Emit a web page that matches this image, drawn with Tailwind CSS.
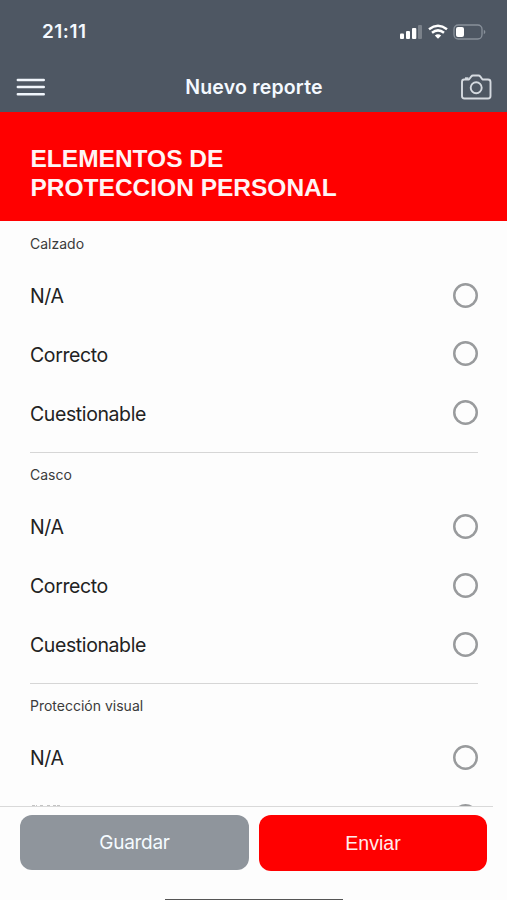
<!DOCTYPE html>
<html lang="es">
<head>
<meta charset="utf-8">
<title>Nuevo reporte</title>
<script src="https://cdn.jsdelivr.net/npm/@tailwindcss/browser@4"></script>
</head>
<body class="w-[507px] h-[900px] overflow-hidden bg-[#fdfdfd] font-['Inter','Liberation_Sans',sans-serif] text-[#222]">
<div class="flex h-[900px] flex-col overflow-hidden">
  <header class="h-[112px] shrink-0 bg-[#4e5763] text-[#f4f9ff]">
    <div class="flex h-[62px] items-center justify-between pl-[42px] pr-[20px]">
      <span class="pt-[2px] text-[19px] font-semibold tracking-[0.5px]">21:11</span>
      <svg width="88" height="20" viewBox="0 0 88 20" fill="none">
        <g fill="#fff"><rect x="1" y="12.5" width="4" height="5.500" rx="1"/><rect x="7" y="10" width="4" height="8" rx="1"/><rect x="13" y="7" width="4.300" height="11" rx="1"/><rect x="19" y="4" width="4" height="14" rx="1" opacity=".25"/></g>
        <g stroke="#fff" stroke-width="2.500"><path d="M30 8.200Q39 1.400 48 8.200"/><path d="M33 11.800Q39 7 45 11.800"/></g>
        <path d="M35.800 14.400Q39 12 42.200 14.400L39 17.800Z" fill="#fff"/>
        <rect x="55" y="4" width="28" height="14" rx="4.200" stroke="#89919b" stroke-width="1.300"/>
        <rect x="57" y="6" width="8" height="10" rx="2" fill="#fff"/>
        <path d="M84.800 8.800v4.400q1.600-.7 1.600-2.200t-1.600-2.200Z" fill="#89919b"/>
      </svg>
    </div>
    <div class="grid h-[50px] grid-cols-[1fr_auto_1fr] items-center pl-[16px] pr-[15px]">
      <svg width="30" height="20" viewBox="0 0 30 20" stroke="#f1f6fc" stroke-width="2.400" stroke-linecap="round"><path d="M1.800 3h26M1.800 10h26M1.800 17.200h26"/></svg>
      <h1 class="pt-[2px] text-[19.5px] font-semibold leading-none tracking-[0.2px]">Nuevo reporte</h1>
      <svg class="justify-self-end" width="32" height="26" viewBox="0 0 32 26" fill="none" stroke="#d5dae0" stroke-width="1.900" stroke-linejoin="round">
        <path d="M4 5.500H9L11.300 2.400Q11.900 1.500 13 1.500h5.500q1.100 0 1.700.9L22.500 5.500H28q2.500 0 2.500 2.500v14q0 2.500-2.500 2.500H4.500Q2 24.500 2 22V8q0-2.500 2-2.500Z"/>
        <circle cx="16.200" cy="13.800" r="5.500"/><path d="M5 4.300h3.500" stroke-width="2"/>
      </svg>
    </div>
  </header>

  <div class="flex h-[109px] shrink-0 items-center bg-[#ff0000] pl-[30.500px] pt-[12px] pb-0 font-['Liberation_Sans',sans-serif]">
    <h2 class="text-[24.5px] font-bold leading-[29px] text-[#fff4f4]">ELEMENTOS DE<br>PROTECCION PERSONAL</h2>
  </div>

  <main class="h-[585px] shrink-0 overflow-hidden px-[30px]">
    <section class="h-[231.500px] border-b border-[#d6d6d6] w-[448px]">
      <h3 class="flex h-[45px] items-center text-[14px] leading-none text-[#3b3b3b]">Calzado</h3>
      <label class="flex h-[58.670px] items-center justify-between text-[19.5px] tracking-[-0.4px]"><span class="pt-[3px]">N/A</span><i class="size-[25px] rounded-full shadow-[inset_0_0_0_2.5px_#999b9d]"></i></label>
      <label class="flex h-[58.670px] items-center justify-between text-[19.5px] tracking-[-0.4px]"><span class="pt-[3px]">Correcto</span><i class="size-[25px] rounded-full shadow-[inset_0_0_0_2.5px_#999b9d]"></i></label>
      <label class="flex h-[58.670px] items-center justify-between text-[19.5px] tracking-[-0.4px]"><span class="pt-[3px]">Cuestionable</span><i class="size-[25px] rounded-full shadow-[inset_0_0_0_2.5px_#999b9d]"></i></label>
    </section>
    <section class="h-[231px] border-b border-[#d6d6d6] w-[448px]">
      <h3 class="flex h-[45px] items-center text-[14px] leading-none text-[#3b3b3b]">Casco</h3>
      <label class="flex h-[58.670px] items-center justify-between text-[19.5px] tracking-[-0.4px]"><span class="pt-[2px]">N/A</span><i class="size-[25px] rounded-full shadow-[inset_0_0_0_2.5px_#999b9d]"></i></label>
      <label class="flex h-[58.670px] items-center justify-between text-[19.5px] tracking-[-0.4px]"><span class="pt-[2px]">Correcto</span><i class="size-[25px] rounded-full shadow-[inset_0_0_0_2.5px_#999b9d]"></i></label>
      <label class="flex h-[58.670px] items-center justify-between text-[19.5px] tracking-[-0.4px]"><span class="pt-[2px]">Cuestionable</span><i class="size-[25px] rounded-full shadow-[inset_0_0_0_2.5px_#999b9d]"></i></label>
    </section>
    <section class="w-[448px]">
      <h3 class="flex h-[45px] items-center text-[14px] leading-none text-[#3b3b3b]">Protección visual</h3>
      <label class="flex h-[58.670px] items-center justify-between text-[19.5px] tracking-[-0.4px]"><span class="pt-[2px]">N/A</span><i class="size-[25px] rounded-full shadow-[inset_0_0_0_2.5px_#999b9d]"></i></label>
      <div class="flex h-[58.670px] items-center justify-between">
        <svg width="32" height="24" viewBox="0 0 32 24" stroke="#c4c4c4" stroke-width="1.500"><path d="M2 1.700h5M10 1.700h3M17 1.700h3M23 1.700h7" stroke-dasharray="3 1"/></svg>
        <i class="size-[25px] rounded-full shadow-[inset_0_0_0_2.5px_#999b9d]"></i>
      </div>
    </section>
  </main>

  <footer class="flex h-[94px] shrink-0 flex-col">
    <div class="h-px w-[493px] bg-[#d9d9d9]"></div>
    <div class="flex gap-[10px] pl-[20px] pt-[8px]">
      <button class="h-[55px] w-[229px] rounded-[12px] bg-[#8f959c] pt-[2px] text-[19px] tracking-[-0.3px] text-[#f5fbff]">Guardar</button>
      <button class="h-[56px] w-[228px] rounded-[12px] bg-[#ff0000] pt-[1px] font-['Liberation_Sans',sans-serif] text-[19.5px] text-[#ffecec]">Enviar</button>
    </div>
    <div class="mt-auto ml-[165px] h-[1px] w-[178px] bg-[#555]"></div>
  </footer>
</div>
</body>
</html>
